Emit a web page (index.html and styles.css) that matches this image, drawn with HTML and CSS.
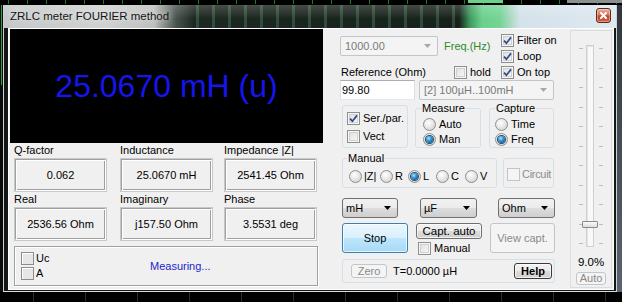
FILE: index.html
```html
<!DOCTYPE html>
<html>
<head>
<meta charset="utf-8">
<title>ZRLC meter FOURIER method</title>
<link rel="stylesheet" href="styles.css">
</head>
<body>
<div class="scope-top"></div>
<div class="desk">
  <div class="strip-left"></div>
  <div class="window">
    <div class="titlebar">
      <span class="title">ZRLC meter FOURIER method</span>
      <span class="close"><svg width="7" height="7" viewBox="0 0 7 7"><path d="M1 1L6 6M6 1L1 6" stroke="#fff" stroke-width="2" stroke-linecap="square"/></svg></span>
    </div>
    <div class="client">
      <div class="left">
        <div class="display"><span class="reading">25.0670 mH (u)</span></div>
        <div class="readouts">
          <div class="grid">
            <div class="cell"><div class="lbl">Q-factor</div><div class="field">0.062</div></div>
            <div class="cell"><div class="lbl">Inductance</div><div class="field">25.0670 mH</div></div>
            <div class="cell"><div class="lbl">Impedance |Z|</div><div class="field">2541.45 Ohm</div></div>
            <div class="cell"><div class="lbl">Real</div><div class="field">2536.56 Ohm</div></div>
            <div class="cell"><div class="lbl">Imaginary</div><div class="field">j157.50 Ohm</div></div>
            <div class="cell"><div class="lbl">Phase</div><div class="field">3.5531 deg</div></div>
          </div>
          <div class="status">
            <div class="cchecks">
              <div class="copt"><span class="cbox"></span><span>Uc</span></div>
              <div class="copt"><span class="cbox"></span><span>A</span></div>
            </div>
            <span class="measuring">Measuring...</span>
          </div>
        </div>
      </div>
      <div class="right">
        <div class="main">
          <div class="sec-a">
            <div class="a-left">
              <div class="row1">
                <div class="combo disabled w98"><span class="ctext">1000.00</span><svg class="carrow" width="7" height="4" viewBox="0 0 7 4"><path d="M0 0H7L3.5 4Z" fill="#a8a8a8"/></svg></div>
                <span class="freq">Freq.(Hz)</span>
              </div>
              <div class="row2">
                <span class="ref-lbl">Reference (Ohm)</span>
                <span class="chk"></span><span class="otext">hold</span>
              </div>
            </div>
            <div class="a-right">
              <div class="opt"><span class="chk on"><svg width="9" height="9" viewBox="0 0 9 9"><path d="M1 4.6L3.4 7.2L8 1.4" fill="none" stroke="#2d4a8c" stroke-width="1.7"/></svg></span><span class="otext">Filter on</span></div>
              <div class="opt"><span class="chk on"><svg width="9" height="9" viewBox="0 0 9 9"><path d="M1 4.6L3.4 7.2L8 1.4" fill="none" stroke="#2d4a8c" stroke-width="1.7"/></svg></span><span class="otext">Loop</span></div>
              <div class="opt"><span class="chk on"><svg width="9" height="9" viewBox="0 0 9 9"><path d="M1 4.6L3.4 7.2L8 1.4" fill="none" stroke="#2d4a8c" stroke-width="1.7"/></svg></span><span class="otext">On top</span></div>
            </div>
          </div>
          <div class="row3">
            <div class="textbox">99.80</div>
            <div class="combo disabled w135"><span class="ctext">[2] 100µH..100mH</span><svg class="carrow" width="7" height="4" viewBox="0 0 7 4"><path d="M0 0H7L3.5 4Z" fill="#a8a8a8"/></svg></div>
          </div>
          <div class="row4">
            <div class="group g-ser">
              <div class="opt"><span class="chk on"><svg width="9" height="9" viewBox="0 0 9 9"><path d="M1 4.6L3.4 7.2L8 1.4" fill="none" stroke="#2d4a8c" stroke-width="1.7"/></svg></span><span class="otext">Ser./par.</span></div>
              <div class="opt"><span class="chk"></span><span class="otext">Vect</span></div>
            </div>
            <div class="group g-measure">
              <span class="glabel">Measure</span>
              <div class="opt"><span class="radio"></span><span class="otext">Auto</span></div>
              <div class="opt"><span class="radio on"></span><span class="otext">Man</span></div>
            </div>
            <div class="group g-capture">
              <span class="glabel">Capture</span>
              <div class="opt"><span class="radio"></span><span class="otext">Time</span></div>
              <div class="opt"><span class="radio on"></span><span class="otext">Freq</span></div>
            </div>
          </div>
          <div class="row5">
            <div class="group g-manual">
              <span class="glabel">Manual</span>
              <div class="ropt w31"><span class="radio"></span><span class="otext">|Z|</span></div>
              <div class="ropt w28"><span class="radio"></span><span class="otext">R</span></div>
              <div class="ropt w28"><span class="radio on"></span><span class="otext">L</span></div>
              <div class="ropt w29"><span class="radio"></span><span class="otext">C</span></div>
              <div class="ropt"><span class="radio"></span><span class="otext">V</span></div>
            </div>
            <div class="group g-circuit">
              <div class="opt"><span class="chk dis"></span><span class="otext gray">Circuit</span></div>
            </div>
          </div>
          <div class="row6">
            <div class="combo dd d-mh"><span class="ctext">mH</span><svg class="carrow" width="7" height="4" viewBox="0 0 7 4"><path d="M0 0H7L3.5 4Z" fill="#000"/></svg></div>
            <div class="combo dd d-uf"><span class="ctext">µF</span><svg class="carrow" width="7" height="4" viewBox="0 0 7 4"><path d="M0 0H7L3.5 4Z" fill="#000"/></svg></div>
            <div class="combo dd d-ohm"><span class="ctext">Ohm</span><svg class="carrow" width="7" height="4" viewBox="0 0 7 4"><path d="M0 0H7L3.5 4Z" fill="#000"/></svg></div>
          </div>
          <div class="row7">
            <div class="btn stop">Stop</div>
            <div class="capt-col">
              <div class="btn capt">Capt. auto</div>
              <div class="opt man"><span class="chk"></span><span class="otext">Manual</span></div>
            </div>
            <div class="btn disabled view">View capt.</div>
          </div>
          <div class="row8">
            <div class="group g-bottom">
              <div class="btn disabled zero">Zero</div>
              <span class="tval">T=0.0000 µH</span>
              <div class="btn help">Help</div>
            </div>
          </div>
        </div>
        <div class="slider-panel">
          <div class="slider-area">
            <div class="ticks"><i></i><i></i><i></i><i></i><i></i><i></i><i></i><i></i><i></i><i></i><i></i></div>
            <div class="track"><span class="thumb"></span></div>
            <div class="ticks"><i></i><i></i><i></i><i></i><i></i><i></i><i></i><i></i><i></i><i></i><i></i></div>
          </div>
          <div class="pct">9.0%</div>
          <div class="btn disabled auto">Auto</div>
        </div>
      </div>
    </div>
  </div>
  <div class="strip-right"></div>
</div>
<div class="scope-bottom"></div>
</body>
</html>
```

FILE: styles.css
```css
* { box-sizing: border-box; }
html, body { margin: 0; padding: 0; }
body {
  width: 622px;
  height: 302px;
  overflow: hidden;
  background: #000;
  font-family: "Liberation Sans", Arial, sans-serif;
  font-size: 11px;
  line-height: 13px;
  color: #000;
}

/* oscilloscope behind the window */
.scope-top {
  height: 5px;
  background:
    linear-gradient(#6bd08c, #6bd08c) 468px 0 / 35px 3px no-repeat,
    linear-gradient(#8a8f8f, #8a8f8f) 567px 0 / 55px 3px no-repeat,
    repeating-linear-gradient(90deg, transparent 0 8px, #1f7a2a 8px 9px, transparent 9px 19px) 0 0 / 100% 4px no-repeat,
    #000;
}
.scope-bottom {
  height: 10px;
  background: repeating-linear-gradient(90deg, transparent 0 33px, #2a2a2a 33px 34px, transparent 34px 52px), #000;
}
.desk { display: flex; height: 287px; }
.strip-left {
  width: 3px;
  background: linear-gradient(90deg, transparent 1px, #2aa040 1px 2px, transparent 2px) 0 0 / 3px 80px no-repeat, #0a0a0a;
}
.strip-right { width: 5px; background: linear-gradient(#30363c, #5a6470); }

.window {
  width: 614px;
  border-left: 1px solid #cfd3d3;
  border-right: 1px solid #cfd3d3;
  border-bottom: 1px solid #dcdcdc;
  background: #121614;
  display: flex;
  flex-direction: column;
}
.titlebar {
  height: 23px;
  display: flex;
  align-items: flex-start;
  background:
    linear-gradient(rgba(255,255,255,.18), rgba(255,255,255,0) 60%),
    repeating-linear-gradient(90deg, transparent 0 6px, rgba(90,150,105,.35) 6px 9px, transparent 9px 16px) 186px 0 / 270px 100% no-repeat,
    linear-gradient(90deg, #c5c8c8 0, #d0d2d2 100px, #bcc0be 150px, #4a544e 172px, #1e2822 190px, #18221c 455px, #3f9b5f 466px, #6bd08c 478px, #74d496 496px, #a9d8c0 506px, #d4e2ea 516px, #dfe8ef 612px);
}
.title {
  padding-left: 6px;
  line-height: 22px;
  font-size: 11.5px;
  color: #141414;
  text-shadow: 0 0 6px rgba(255,255,255,.9);
}
.close {
  margin-left: auto;
  margin-right: 5px;
  margin-top: 3px;
  width: 15px;
  height: 15px;
  border: 1px solid #5e2a1e;
  border-radius: 3px;
  background: linear-gradient(#eab0a0, #d8735a 45%, #c3442a 55%, #d2634a);
  box-shadow: inset 0 0 0 1px rgba(255,255,255,.35);
  display: flex;
  align-items: center;
  justify-content: center;
}

.client {
  margin: 0 2px 1px 4px;
  border: 1px solid #fff;
  height: 262px;
  display: flex;
  background: #f0f0f0;
}

/* left part */
.left { width: 314px; display: flex; flex-direction: column; }
.display {
  margin-left: 1px;
  height: 114px;
  background: #000;
  display: flex;
  align-items: center;
  justify-content: center;
}
.reading { font-size: 32px; line-height: 32px; color: #1515ef; }
.readouts { flex: 1; padding: 1px 0 0 5px; }
.grid { display: grid; grid-template-columns: 106px 104px 93px; row-gap: 1px; }
.lbl { height: 13px; margin-bottom: 1px; white-space: nowrap; }
.field {
  width: 93px;
  height: 34px;
  display: flex;
  align-items: center;
  justify-content: center;
  border: 2px solid;
  border-color: #a0a0a0 #fff #fff #a0a0a0;
  box-shadow: inset 1px 1px 0 #fff, inset -1px -1px 0 #a0a0a0;
  outline: 1px solid #c8c8c8;
  outline-offset: -1px;
}
.status {
  margin-top: 5px;
  width: 304px;
  height: 40px;
  display: flex;
  align-items: center;
  border: 1px solid #a0a0a0;
  box-shadow: inset 1px 1px 0 #fff, 1px 1px 0 #fff;
}
.cchecks { width: 135px; padding-left: 6px; display: flex; flex-direction: column; gap: 2px; }
.copt { display: flex; align-items: center; height: 13px; gap: 2px; }
.cbox {
  width: 13px;
  height: 13px;
  border: 1px solid #8c8c8c;
  background: #e6e6e6;
  box-shadow: inset 1px 1px 0 #fff;
}
.measuring { color: #1e1ec8; }

/* right part */
.right { width: 290px; display: flex; }
.main { width: 246px; padding: 3px 0 0 17px; }
.sec-a { display: flex; height: 48px; }
.a-left { width: 161px; }
.row1 { margin-top: 4px; height: 20px; display: flex; align-items: center; }
.row2 { margin-top: 8px; height: 16px; display: flex; align-items: center; }
.ref-lbl { width: 114px; padding-left: 1px; }
.freq { margin-left: 6px; color: #2a8a2a; }
.a-right { display: flex; flex-direction: column; }
.a-right .opt { height: 16px; }

.opt { display: flex; align-items: center; }
.otext { margin-left: 3px; white-space: nowrap; }
.gray { color: #8d8d8d; }

.chk {
  flex: none;
  width: 13px;
  height: 13px;
  border: 1px solid #8e8f8f;
  background: linear-gradient(135deg, #dcdcdc, #fbfbfb);
  box-shadow: inset 0 0 0 1px #f6f6f6, inset 0 0 0 2px #d0d0d0;
  display: flex;
  align-items: center;
  justify-content: center;
}
.chk.dis { border-color: #c4c4c4; background: #f4f4f4; box-shadow: none; }
.radio {
  flex: none;
  width: 13px;
  height: 13px;
  border-radius: 50%;
  border: 1px solid #8e8f8f;
  background: radial-gradient(circle at 40% 35%, #fff 0, #e8e8e8 45%, #c8c8c8 100%);
  display: flex;
  align-items: center;
  justify-content: center;
}
.radio.on::after {
  content: "";
  width: 7px;
  height: 7px;
  border-radius: 50%;
  background: radial-gradient(circle at 40% 35%, #a8e4ff 0, #2b8ad0 45%, #0b3f6e 100%);
  box-shadow: 0 0 0 1px #2a4a6a;
}

.combo {
  height: 20px;
  display: flex;
  align-items: center;
  border: 1px solid #707070;
  border-radius: 3px;
  background: linear-gradient(#f2f2f2 0%, #ebebeb 50%, #dddddd 50%, #cfcfcf 100%);
}
.combo .ctext { flex: 1; padding-left: 3px; white-space: nowrap; }
.combo .carrow { margin-right: 6px; }
.combo.disabled { border-color: #c2c6c9; background: #f4f4f4; color: #7a7a7a; border-radius: 2px; }
.combo.disabled .ctext { padding-left: 4px; }
.w98 { width: 98px; }
.w135 { width: 135px; margin-left: 4px; }

.row3 { height: 20px; display: flex; }
.textbox {
  width: 75px;
  height: 20px;
  border: 1px solid #dbdfe6;
  border-top-color: #abadb3;
  border-bottom-color: #e3e9ef;
  background: #fff;
  padding-left: 1px;
  line-height: 18px;
}

.group { position: relative; border: 1px solid #d5dfe5; border-radius: 3px; }
.glabel {
  position: absolute;
  top: -7px;
  left: 5px;
  padding: 0 1px;
  background: #f0f0f0;
  line-height: 13px;
}
.row4 { margin-top: 5px; height: 43px; display: flex; align-items: flex-start; }
.g-ser { margin-left: 2px; width: 66px; height: 43px; padding: 6px 0 0 4px; display: flex; flex-direction: column; gap: 5px; }
.g-ser .opt { height: 13px; }
.g-measure { margin-left: 7px; margin-top: 3px; width: 66px; height: 40px; padding: 9px 0 0 7px; display: flex; flex-direction: column; gap: 2px; }
.g-capture { margin-left: 8px; margin-top: 3px; width: 65px; height: 40px; padding: 9px 0 0 5px; display: flex; flex-direction: column; gap: 2px; }
.g-measure .opt, .g-capture .opt { height: 13px; }

.row5 { margin-top: 10px; height: 30px; display: flex; }
.g-manual { margin-left: 2px; width: 155px; height: 30px; padding: 11px 0 0 6px; display: flex; align-items: flex-start; }
.g-manual .glabel { left: 4px; }
.ropt { display: flex; align-items: center; height: 13px; }
.ropt .otext { margin-left: 2px; }
.w31 { width: 31px; }
.w28 { width: 28px; }
.w29 { width: 29px; }
.g-circuit { margin-left: 6px; width: 51px; height: 30px; padding: 9px 0 0 3px; }
.g-circuit .opt { height: 13px; }
.g-circuit .otext { margin-left: 2px; letter-spacing: -0.3px; }

.row6 { margin-top: 10px; height: 20px; display: flex; }
.d-mh { margin-left: 2px; width: 56px; }
.d-uf { margin-left: 22px; width: 57px; }
.d-ohm { margin-left: 21px; width: 57px; }

.btn {
  display: flex;
  align-items: center;
  justify-content: center;
  border: 1px solid #707070;
  border-radius: 3px;
  background: linear-gradient(#f2f2f2 0%, #ebebeb 50%, #dddddd 50%, #cfcfcf 100%);
  box-shadow: inset 0 0 0 1px rgba(255,255,255,.7);
  white-space: nowrap;
}
.btn.disabled { border-color: #c2c6c9; background: #f4f4f4; color: #8a8a8a; box-shadow: none; }
.row7 { margin-top: 5px; height: 30px; display: flex; }
.stop {
  margin-left: 2px;
  width: 66px;
  height: 30px;
  border-color: #3c7fb1;
  background: linear-gradient(#eaf6fd 0%, #d9f0fc 50%, #bee6fd 50%, #a7d9f5 100%);
}
.capt-col { margin-left: 8px; width: 66px; }
.capt { height: 16px; font-size: 11.5px; }
.man { margin-top: 3px; padding-left: 2px; height: 13px; }
.view { margin-left: 8px; width: 65px; height: 30px; }

.row8 { margin-top: 6px; display: flex; }
.g-bottom { margin-left: 2px; width: 213px; height: 24px; display: flex; align-items: center; padding-left: 8px; }
.zero { width: 36px; height: 14px; }
.tval { margin-left: 6px; }
.help { margin-left: auto; margin-right: 2px; width: 38px; height: 16px; font-weight: bold; border-color: #3a3a3a; }

.slider-panel {
  margin: 1px 1px 0 1px;
  width: 42px;
  height: 258px;
  border: 1px solid #d8dde0;
  display: flex;
  flex-direction: column;
  align-items: center;
}
.slider-area { margin-top: 14px; height: 202px; display: flex; gap: 3px; }
.slider-area .ticks:last-child { margin-left: 2px; }
.ticks { width: 4px; padding: 3px 0; display: flex; flex-direction: column; justify-content: space-between; }
.ticks i { display: block; height: 1px; background: #bdbdbd; }
.track {
  position: relative;
  width: 8px;
  height: 202px;
  border: 1px solid #d0d0d0;
  background: #f8f8f8;
  box-shadow: inset 1px 1px 0 #e4e4e4;
}
.thumb {
  position: absolute;
  left: -5px;
  top: 175px;
  width: 16px;
  height: 7px;
  border: 1px solid #8a8a8a;
  border-radius: 1px;
  background: linear-gradient(#fafafa, #dcdcdc);
}
.pct { margin-top: 8px; font-size: 11.5px; line-height: 14px; }
.auto { margin-top: 3px; width: 30px; height: 13px; }
```
